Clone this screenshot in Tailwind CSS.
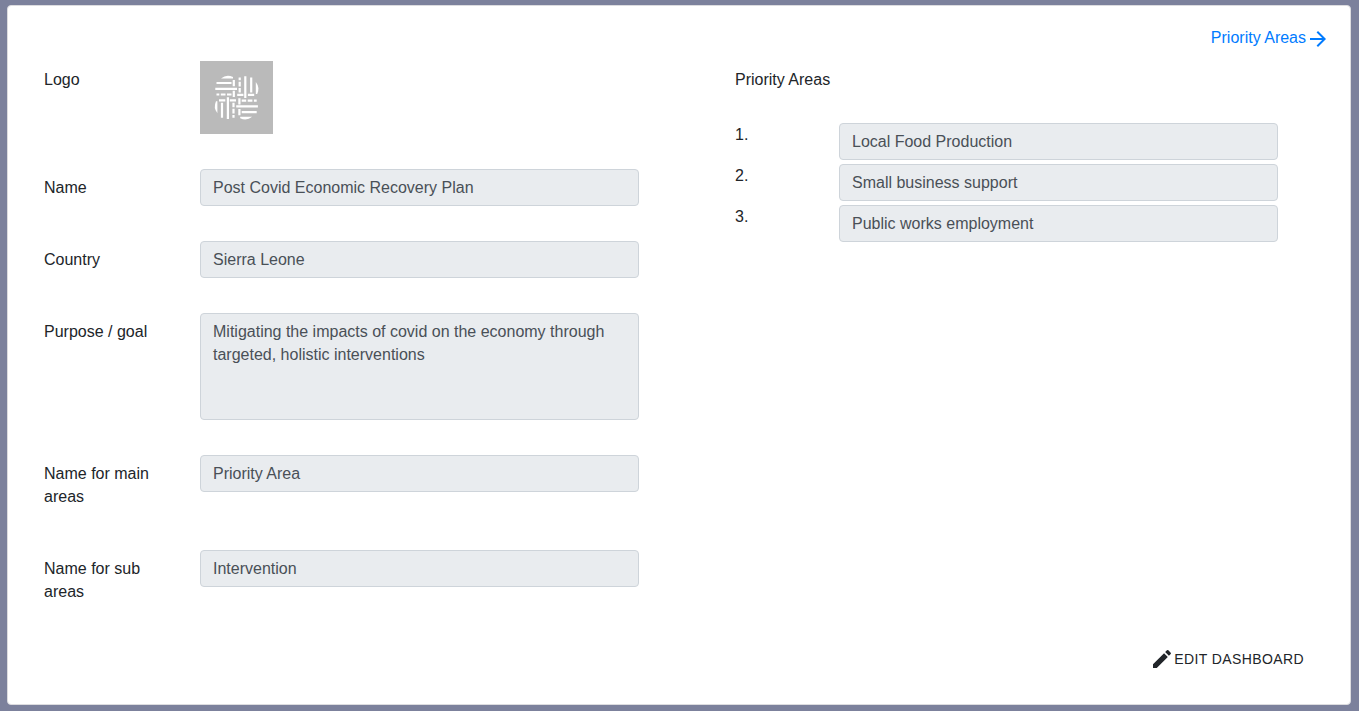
<!DOCTYPE html>
<html lang="en">
<head>
<meta charset="utf-8">
<title>Dashboard</title>
<script src="https://cdn.jsdelivr.net/npm/@tailwindcss/browser@4"></script>
</head>
<body class="flex min-h-screen bg-[#7c819c] px-[7px] pt-[5px] pb-[6px] font-['Liberation_Sans',Arial,sans-serif] text-base leading-[23px] text-[#212529]">
<main class="mr-px flex grow flex-col rounded border border-[#dcdcdf] bg-white pr-5 pl-9">
  <nav class="flex justify-end pt-[17px]">
    <a href="#areas" class="flex items-center text-[#007bff]">Priority Areas
      <svg class="mt-1 size-6" viewBox="0 0 24 24" fill="currentColor" aria-hidden="true"><path d="M12 4l-1.410 1.410L16.170 11H4v2h12.170l-5.580 5.590L12 20l8-8z"/></svg>
    </a>
  </nav>
  <div class="grid grid-cols-[595fr_543fr] gap-24 pt-[10px] pr-[52px]">
    <form class="grid grid-cols-[120px_1fr] content-start gap-x-9 gap-y-[35px]">
      <span class="pt-[7px]">Logo</span>
      <svg class="size-[73px] bg-[#bababa]" viewBox="0 0 73 73" role="img" aria-label="Logo">
        <defs>
          <g id="quarter">
            <path fill="#fff" d="M21 17.400Q26.500 13 33 16v1.400z"/>
            <path fill="none" stroke="#fff" stroke-width="2.200" d="M16.500 22H31.500M15.300 27.900H37M16.500 33.500H19.300M20.800 33.500H25.500M27 33.500H31.500M33.800 19V25.300M33.800 29.800V36"/>
          </g>
        </defs>
        <use href="#quarter"/>
        <use href="#quarter" transform="rotate(90 36.600 36.600)"/>
        <use href="#quarter" transform="rotate(180 36.600 36.600)"/>
        <use href="#quarter" transform="rotate(270 36.600 36.600)"/>
      </svg>

      <label for="name" class="pt-[7px]">Name</label>
      <input id="name" disabled value="Post Covid Economic Recovery Plan" class="h-[37px] w-full rounded border border-[#ced4da] bg-[#e9ecef] px-3 text-[#495057]">

      <label for="country" class="pt-[7px]">Country</label>
      <input id="country" disabled value="Sierra Leone" class="h-[37px] w-full rounded border border-[#ced4da] bg-[#e9ecef] px-3 text-[#495057]">

      <label for="goal" class="pt-[7px]">Purpose / goal</label>
      <textarea id="goal" disabled class="h-[107px] w-full resize-none rounded border border-[#ced4da] bg-[#e9ecef] px-3 py-[6px] text-[#495057]">Mitigating the impacts of covid on the economy through targeted, holistic interventions</textarea>

      <label for="main" class="py-[7px]">Name for main areas</label>
      <input id="main" disabled value="Priority Area" class="h-[37px] w-full rounded border border-[#ced4da] bg-[#e9ecef] px-3 text-[#495057]">

      <label for="sub" class="py-[7px]">Name for sub areas</label>
      <input id="sub" disabled value="Intervention" class="h-[37px] w-full rounded border border-[#ced4da] bg-[#e9ecef] px-3 text-[#495057]">
    </form>
    <section id="areas">
      <h2 class="pt-[7px] pb-8">Priority Areas</h2>
      <div class="grid grid-cols-[104px_1fr] gap-y-1">
        <label for="a1">1.</label>
        <input id="a1" disabled value="Local Food Production" class="h-[37px] w-full rounded border border-[#ced4da] bg-[#e9ecef] px-3 text-[#495057]">
        <label for="a2">2.</label>
        <input id="a2" disabled value="Small business support" class="h-[37px] w-full rounded border border-[#ced4da] bg-[#e9ecef] px-3 text-[#495057]">
        <label for="a3">3.</label>
        <input id="a3" disabled value="Public works employment" class="h-[37px] w-full rounded border border-[#ced4da] bg-[#e9ecef] px-3 text-[#495057]">
      </div>
    </section>
  </div>
  <div class="mt-auto flex justify-end pr-[26px] pb-[33px]">
    <button type="button" class="flex items-center text-sm tracking-[0.4px] uppercase">
      <svg class="size-6" viewBox="0 0 24 24" fill="currentColor" aria-hidden="true"><path d="M3 17.250V21h3.750L17.810 9.940l-3.750-3.750L3 17.250zM20.710 7.040c.39-.39.39-1.020 0-1.410l-2.340-2.340a.996.996 0 0 0-1.410 0l-1.830 1.830 3.750 3.750 1.830-1.830z"/></svg>
      Edit Dashboard
    </button>
  </div>
</main>
</body>
</html>
